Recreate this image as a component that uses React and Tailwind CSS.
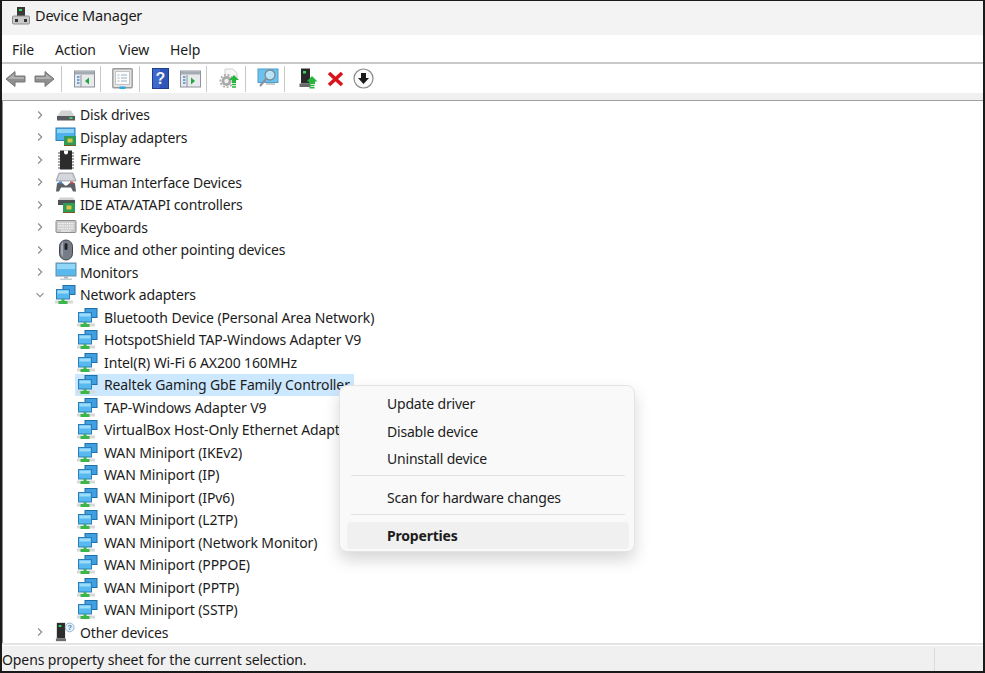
import React from "react";

const F = { fontFamily: '"Noto Sans", "Open Sans", sans-serif' };

const Net = () => (
  <svg width="22" height="21" viewBox="0 0 22 20">
    <rect x="8" y="1" width="12" height="9" fill="#3f9fe0" stroke="#1f6fa8" />
    <rect x="1.500" y="5" width="13" height="9.500" fill="#58b8f0" stroke="#2a7fb8" />
    <path d="M2.500 6h11v3h-11z" fill="#9bdcf8" />
    <rect x="0" y="16" width="18" height="3" fill="#d8d8d8" />
    <path d="M6.500 14.500h3v2h3v3h-9v-3h3z" fill="#3cb54a" />
  </svg>
);
const Chevron = ({ open }) => (
  <svg width="10" height="10" viewBox="0 0 10 10" fill="none" stroke="#8a8a8a" strokeWidth="1.100">
    {open ? <path d="M1.500 3.200 5 6.700l3.500-3.500" /> : <path d="M3.200 1.500 6.700 5 3.200 8.500" />}
  </svg>
);
const Chip = ({ x = 9, y = 10 }) => (
  <g>
    <rect x={x} y={y} width="12" height="9" fill="#2f9c55" />
    <rect x={x + 3.500} y={y + 2.500} width="5" height="4" fill="#d9c24a" />
    <rect x={x} y={y + 9} width="12" height="1" fill="#7a5a20" />
  </g>
);
const Disk = () => (
  <svg width="22" height="20" viewBox="0 0 22 20">
    <path d="M2.500 11 6 5.500h10l3.500 5.500z" fill="#d2d2d2" />
    <rect x="2" y="11" width="18" height="4.500" fill="#55585c" />
    <rect x="14.500" y="12" width="3" height="2" fill="#45d060" />
  </svg>
);
const Display = () => (
  <svg width="22" height="20" viewBox="0 0 22 20">
    <rect x="1" y="1" width="19" height="12.500" fill="#4fb0ea" stroke="#2b7fb8" />
    <path d="M2 2h17v4H2z" fill="#8ed4f6" />
    <Chip x={9} y={9} />
  </svg>
);
const Firmware = () => (
  <svg width="22" height="22" viewBox="0 0 22 22">
    <rect x="5" y="1.500" width="12" height="19" fill="#2c2c2c" />
    <path d="M9 1.500h4v2a2 2 0 0 1-4 0z" fill="#fff" />
    <path d="M3 4h2M3 7h2M3 10h2M3 13h2M3 16h2M3 19h2M17 4h2M17 7h2M17 10h2M17 13h2M17 16h2M17 19h2" stroke="#8a8a8a" strokeWidth="1.400" />
  </svg>
);
const Hid = () => (
  <svg width="22" height="21" viewBox="0 0 22 20">
    <path d="M4 0.500h14l3 8H1z" fill="#c9ccd2" stroke="#8b8f98" strokeWidth=".7" />
    <path d="M5 2.500h12M4 4.500h14M3.500 6.500h15" stroke="#f0f0f0" strokeWidth=".9" strokeDasharray="1.500 .8" />
    <path d="M1 19l1-8c.3-1.500 5-1.500 6 0l2 2h2l2-2c1-1.500 5.700-1.500 6 0l1 8h-3l-2-4h-10l-2 4z" fill="#5c5f66" />
    <rect x="4" y="9" width="3" height="2" fill="#3f8fd8" />
    <rect x="15" y="9" width="3" height="2" fill="#d05050" />
  </svg>
);
const Ide = () => (
  <svg width="22" height="20" viewBox="0 0 22 20">
    <path d="M3 5 5 2.500h13L20 5z" fill="#d2d2d2" />
    <rect x="3" y="5" width="17" height="5" fill="#4d5054" />
    <Chip x={8} y={8} />
  </svg>
);
const Keyboard = () => (
  <svg width="22" height="20" viewBox="0 0 22 20">
    <rect x="1" y="3.500" width="20" height="12" rx="1" fill="#c8c8c8" stroke="#8f8f8f" />
    <path d="M3 6.500h16M3 9h16M3 11.500h16" stroke="#f4f4f4" strokeWidth="1.300" strokeDasharray="1.500 .7" />
    <path d="M6 14h10" stroke="#f4f4f4" strokeWidth="1" />
  </svg>
);
const Mouse = () => (
  <svg width="22" height="22" viewBox="0 0 22 22">
    <rect x="4.500" y="1" width="13" height="20" rx="6.500" fill="#767c88" stroke="#3f434b" />
    <rect x="9.500" y="4" width="3" height="7" rx="1.500" fill="#1f2227" />
    <path d="M6 8c0-3 1-5 2-5v15c-1-1-2-3-2-5z" fill="#a6abb4" />
  </svg>
);
const Monitor = () => (
  <svg width="22" height="20" viewBox="0 0 22 20">
    <rect x="1" y="1" width="20" height="13" fill="#59b9ee" stroke="#6d8ea3" />
    <path d="M2 2h18v5H2z" fill="#8fd6f7" />
    <rect x="9" y="14.500" width="4" height="2" fill="#a9b4bb" />
    <rect x="5" y="16.500" width="12" height="1.500" fill="#c6ced3" />
  </svg>
);
const Other = () => (
  <svg width="24" height="22" viewBox="0 0 24 22">
    <rect x="2" y="1" width="9" height="17" fill="#2d2d2d" />
    <rect x="4" y="3.500" width="3" height="2" fill="#3ddc5c" />
    <rect x="1" y="18" width="11" height="3" fill="#6e6e6e" />
    <circle cx="16" cy="6" r="4.800" fill="#e6f1fa" stroke="#8fb0cc" />
    <text x="16" y="9" textAnchor="middle" fontSize="8" fontWeight="700" fill="#3f7fc0" fontFamily="Liberation Sans">?</text>
  </svg>
);

const ArrowL = ({ flip }) => (
  <svg width="21" height="18" viewBox="0 0 21 18" style={flip ? { transform: "scaleX(-1)" } : undefined}>
    <path d="M10 1.500 1 9l9 7.500V12h10V6H10z" fill="#8f8f8f" stroke="#777" />
    <path d="M3 9l6-5v3h10v2z" fill="#b0b0b0" />
  </svg>
);
const Win = ({ right }) => (
  <svg width="21" height="18" viewBox="0 0 21 18">
    <rect x=".5" y="1" width="20" height="16" fill="#e8eaed" stroke="#8d949c" />
    <rect x="1" y="1.500" width="19" height="3" fill="#a4abb3" />
    <path d="M7 5v12" stroke="#8d949c" />
    <path d="M3 7h2.500M3 10h2.500M3 13h2.500" stroke="#4a8ad0" strokeWidth="1.500" />
    {right ? <path d="M11 7.500v7l4-3.500z" fill="#22a83c" /> : <path d="M15 7.500v7l-4-3.500z" fill="#22a83c" />}
  </svg>
);
const Props = () => (
  <svg width="21" height="22" viewBox="0 0 21 22">
    <rect x=".8" y=".8" width="19.400" height="19" rx="1" fill="#e4e4e4" stroke="#9a9a9a" strokeWidth="1.400" />
    <rect x="3.500" y="3.500" width="14" height="13" fill="#fbfbfb" stroke="#c4c4c4" />
    <path d="M5.500 7h2M9 7h6M5.500 10h2M9 10h6M5.500 13h2M9 13h6" stroke="#9fb2c2" />
    <rect x="7.500" y="18.500" width="6" height="2.500" fill="#29a9e0" />
  </svg>
);
const Help = () => (
  <svg width="17" height="21" viewBox="0 0 17 21">
    <rect x=".5" y=".5" width="16" height="20" fill="#2f55b8" stroke="#1f3c8e" />
    <path d="M1 1h7v19H1z" fill="#3e69cc" />
    <text x="8.500" y="16" textAnchor="middle" fontSize="16" fontWeight="700" fill="#f0f0f0" fontFamily="Liberation Sans">?</text>
  </svg>
);
const GearUp = () => (
  <svg width="21" height="22" viewBox="0 0 21 22">
    <path d="M6 1h8l4 4v6H6z" fill="#f6f6f6" stroke="#cfcfcf" />
    <circle cx="7.500" cy="13" r="5" fill="#a9a9a9" />
    <circle cx="7.500" cy="13" r="6.200" fill="none" stroke="#a9a9a9" strokeWidth="1.600" strokeDasharray="2 1.700" />
    <circle cx="7.500" cy="13" r="2.200" fill="#f2f2f2" />
    <path d="M15 7l5 5h-3v3h-4v-3h-3z" fill="#27b53f" />
    <path d="M13 16.500h4M13 19h4" stroke="#27b53f" strokeWidth="1.500" />
  </svg>
);
const Scan = () => (
  <svg width="22" height="21" viewBox="0 0 22 21">
    <rect x="1" y="1" width="20" height="13.500" fill="#6cc2ef" stroke="#4f9cc9" />
    <circle cx="13" cy="7" r="5" fill="#b9e4f8" stroke="#7a8a94" strokeWidth="1.300" />
    <path d="M9.500 10.500 3 18" stroke="#8a8f94" strokeWidth="2" />
    <path d="M9 16h9" stroke="#b5bcc2" strokeWidth="1.500" />
  </svg>
);
const DevUp = () => (
  <svg width="19" height="21" viewBox="0 0 19 21">
    <rect x="2" y="0.500" width="9" height="15" fill="#2a2a2a" />
    <rect x="4" y="3" width="3" height="2.500" fill="#35d858" />
    <rect x="0.500" y="15.500" width="11" height="3.500" fill="#6a6a6a" />
    <path d="M13 8l5.500 5.500H16V16h-6v-2.500H7.500z" fill="#27b53f" />
    <path d="M10.500 17.500h5M10.500 19.800h5" stroke="#27b53f" strokeWidth="1.400" />
  </svg>
);
const Red = () => (
  <svg width="17" height="16" viewBox="0 0 17 16">
    <path d="M2 2l13 12M15 2 2 14" stroke="#d8141c" strokeWidth="3.600" />
  </svg>
);
const Down = () => (
  <svg width="21" height="21" viewBox="0 0 21 21">
    <circle cx="10.500" cy="10.500" r="9.500" fill="#fafafa" stroke="#8a8a8a" strokeWidth="1.200" />
    <path d="M8 5h5v5h3l-5.500 6L5 10h3z" fill="#1a1a1a" />
  </svg>
);
const Sep = () => <div className="w-px h-[26px] bg-[#c8c8c8]" />;

const categories = [
  ["Disk drives", Disk],
  ["Display adapters", Display],
  ["Firmware", Firmware],
  ["Human Interface Devices", Hid],
  ["IDE ATA/ATAPI controllers", Ide],
  ["Keyboards", Keyboard],
  ["Mice and other pointing devices", Mouse],
  ["Monitors", Monitor],
];
const adapters = [
  "Bluetooth Device (Personal Area Network)",
  "HotspotShield TAP-Windows Adapter V9",
  "Intel(R) Wi-Fi 6 AX200 160MHz",
  "Realtek Gaming GbE Family Controller",
  "TAP-Windows Adapter V9",
  "VirtualBox Host-Only Ethernet Adapter",
  "WAN Miniport (IKEv2)",
  "WAN Miniport (IP)",
  "WAN Miniport (IPv6)",
  "WAN Miniport (L2TP)",
  "WAN Miniport (Network Monitor)",
  "WAN Miniport (PPPOE)",
  "WAN Miniport (PPTP)",
  "WAN Miniport (SSTP)",
];

const Cat = ({ label, Icon, open }) => (
  <div className="h-[22.5px] flex items-center shrink-0">
    <div className="w-[10px] ml-[32px] flex items-center"><Chevron open={open} /></div>
    <div className="w-[22px] h-[22px] ml-[10px] flex items-center justify-center shrink-0"><Icon /></div>
    <span className="ml-[3px] text-[14px] tracking-[-0.15px] text-[#1c1c1c] whitespace-nowrap">{label}</span>
  </div>
);

export default function App() {
  return (
    <div style={F} className="relative w-[985px] h-[673px] overflow-hidden bg-white border-t border-l-2 border-r-2 border-b-2 border-[#1a1a1a] flex flex-col">
      <div className="h-[34px] bg-[#f3f3f3] flex items-center shrink-0 pl-[9px] pb-[4px]">
        <svg width="20" height="20" viewBox="0 0 20 20">
          <rect x="6" y="1" width="8" height="10" fill="#3a3a3a" />
          <rect x="8" y="3" width="3" height="2" fill="#3ddc5c" />
          <rect x="1.500" y="10" width="17" height="8" rx="1" fill="#c9c9c9" stroke="#8e8e8e" />
          <rect x="4" y="13" width="3" height="3" fill="#333" />
          <rect x="13" y="13" width="3" height="3" fill="#333" />
        </svg>
        <span className="ml-[4px] text-[14.5px] tracking-[-0.2px] text-[#1a1a1a]">Device Manager</span>
      </div>
      <div className="h-[27px] bg-white flex items-center shrink-0 text-[14px] tracking-[-0.1px] text-[#1c1c1c] pl-[10px] pt-[2px]">
        <span>File</span><span className="ml-[21px]">Action</span><span className="ml-[23px]">View</span><span className="ml-[21px]">Help</span>
      </div>
      <div className="h-[2px] bg-[#c9c9c9] shrink-0" />
      <div className="h-[29px] bg-white flex items-center shrink-0 pl-[3px]">
        <ArrowL /><div className="w-[8px]" /><ArrowL flip /><div className="w-[6px]" /><Sep />
        <div className="w-[12px]" /><Win /><div className="w-[5px]" /><Sep />
        <div className="w-[11px]" /><Props /><div className="w-[6px]" /><Sep />
        <div className="w-[12px]" /><Help /><div className="w-[11px]" /><Win right /><div className="w-[5px]" /><Sep />
        <div className="w-[12px]" /><GearUp /><div className="w-[5px]" /><Sep />
        <div className="w-[11px]" /><Scan /><div className="w-[5px]" /><Sep />
        <div className="w-[14px]" /><DevUp /><div className="w-[9px]" /><Red /><div className="w-[9px]" /><Down />
      </div>
      <div className="h-[7px] bg-[#f0f0f0] shrink-0" />
      <div className="h-px bg-[#a0a0a0] shrink-0" />
      <div className="flex-1 min-h-0 overflow-hidden bg-white border-l border-[#8f8f8f] pt-[2.5px] flex flex-col">
        {categories.map(([l, I]) => <Cat key={l} label={l} Icon={I} />)}
        <Cat label="Network adapters" Icon={Net} open />
        {adapters.map((a, i) => (
          <div key={a} className="h-[22.5px] flex items-center shrink-0">
            <div className={`ml-[72px] h-[22.5px] flex items-center pl-[2px] pr-[4px] ${i === 3 ? "bg-[#cce8ff]" : ""}`}>
              <div className="w-[22px] flex items-center justify-center shrink-0"><Net /></div>
              <span className="ml-[5px] text-[14px] tracking-[-0.12px] text-[#1c1c1c] whitespace-nowrap">{a}</span>
            </div>
          </div>
        ))}
        <Cat label="Other devices" Icon={Other} />
      </div>
      <div className="h-[2px] bg-[#e4e4e4] shrink-0" />
      <div className="h-[1px] bg-white shrink-0" />
      <div className="h-[25px] bg-[#f0f0f0] shrink-0 flex items-center text-[14px] tracking-[-0.1px] text-[#1a1a1a] pt-[2px]">
        <span className="flex-1 whitespace-nowrap">Opens property sheet for the current selection.</span>
        <div className="w-px h-[24px] bg-[#dcdcdc] mr-[48px]" />
      </div>

      <div className="absolute left-[337px] top-[384px] w-[296px] h-[167px] bg-[#f9f9f9] rounded-lg border border-[#e4e4e4] shadow-[0_8px_16px_rgba(0,0,0,0.16)] text-[14px] tracking-[-0.2px] text-[#1c1c1c] flex flex-col pl-[7px] pr-[5px] pt-[4px]">
        <div className="h-[27.5px] flex items-center pl-[40px] shrink-0">Update driver</div>
        <div className="h-[27.5px] flex items-center pl-[40px] shrink-0">Disable device</div>
        <div className="h-[27.5px] flex items-center pl-[40px] shrink-0">Uninstall device</div>
        <div className="h-px bg-[#e2e2e2] mx-[4px] mt-[2.5px] shrink-0" />
        <div className="h-[27px] flex items-center pl-[40px] mt-[8px] shrink-0">Scan for hardware changes</div>
        <div className="h-px bg-[#e2e2e2] mx-[4px] mt-[3px] mb-[7px] shrink-0" />
        <div className="h-[27px] flex items-center pl-[40px] bg-[#f0f0f0] rounded-[4px] font-bold shrink-0">Properties</div>
      </div>
    </div>
  );
}
